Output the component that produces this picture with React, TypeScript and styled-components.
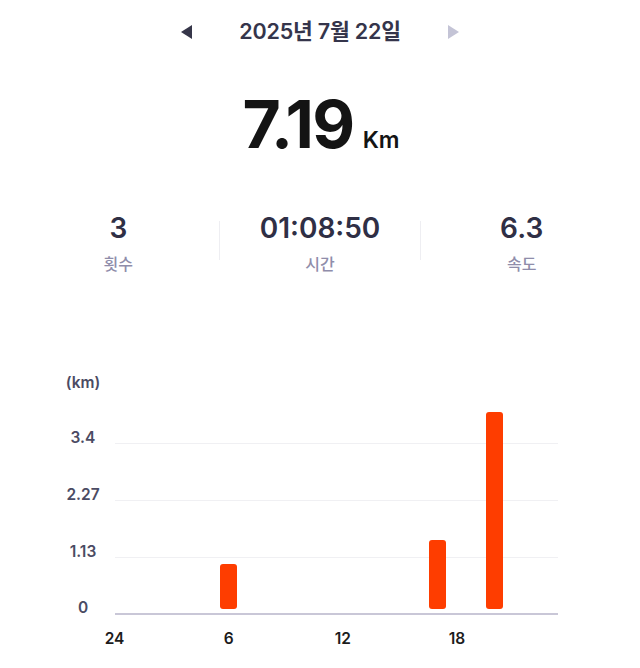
import React from 'react'
import styled, { createGlobalStyle } from 'styled-components'

const GlobalStyle = createGlobalStyle`
    body {
        margin: 0;
        background: #ffffff;
        font-family: Inter, 'Noto Sans CJK KR', sans-serif;
    }
`

const KM_PX = 50
const HOUR_PX = 19.03

const gridValues = [0, 1.13, 2.27, 3.4]
const hourTicks = [
    { hour: 0, label: '24' },
    { hour: 6, label: '6' },
    { hour: 12, label: '12' },
    { hour: 18, label: '18' },
]
const runs = [
    { hour: 6, km: 0.9 },
    { hour: 17, km: 1.38 },
    { hour: 20, km: 3.94 },
]

const Page = styled.div`
    width: 640px;
    height: 668px;
    overflow: hidden;
`

const DateBar = styled.div`
    height: 62px;
    display: flex;
    justify-content: center;
    align-items: center;
`

const DateNav = styled.div`
    width: 278px;
    display: flex;
    justify-content: space-between;
    align-items: center;
`

const Arrow = styled.span<{ $dir: 'left' | 'right'; $muted?: boolean }>`
    width: 0;
    height: 0;
    border-top: 7px solid transparent;
    border-bottom: 7px solid transparent;
    ${({ $dir, $muted }) =>
        $dir === 'left'
            ? `border-right: 11px solid ${$muted ? '#c4c4d6' : '#363649'};`
            : `border-left: 11px solid ${$muted ? '#c4c4d6' : '#363649'};`}
    margin-top: 1px;
`

const DateText = styled.h2`
    margin: 0;
    font-size: 21.5px;
    line-height: 24px;
    font-weight: 600;
    color: #35354b;
    letter-spacing: -0.2px;
`

const Total = styled.div`
    margin-top: 30px;
    display: flex;
    justify-content: center;
    align-items: baseline;
    gap: 9px;
    padding-left: 2px;
`

const TotalValue = styled.span`
    font-size: 66px;
    line-height: 64px;
    font-weight: 700;
    color: #141414;
    letter-spacing: -1.6px;
`

const TotalUnit = styled.span`
    font-size: 23px;
    font-weight: 600;
    color: #141414;
`

const StatsRow = styled.div`
    margin-top: 58px;
    padding: 0 18px;
    display: grid;
    grid-template-columns: 1fr 1px 1fr 1px 1fr;
`

const Stat = styled.div`
    display: flex;
    flex-direction: column;
    align-items: center;
    gap: 14px;
`

const StatValue = styled.span`
    font-size: 28px;
    line-height: 28px;
    font-weight: 600;
    color: #2f2f45;
`

const StatLabel = styled.span`
    font-size: 16px;
    line-height: 16px;
    font-weight: 500;
    color: #8f8daa;
`

const Divider = styled.div`
    width: 1px;
    height: 39px;
    margin-top: 7px;
    background: #eeeef2;
`

const Chart = styled.div`
    margin: 103px 0 0 51px;
    display: grid;
    grid-template-columns: 64px 443px;
    grid-template-rows: 15px 214px 15px;
    row-gap: 11px;
`

const AxisText = styled.span`
    font-size: 15.5px;
    line-height: 15px;
    font-weight: 600;
    color: #4b4b63;
`

const UnitLabel = styled(AxisText)`
    grid-column: 1;
    text-align: center;
`

const YAxis = styled.div`
    grid-column: 1;
    position: relative;
`

const YTick = styled(AxisText)`
    position: absolute;
    left: 0;
    right: 0;
    text-align: center;
`

const Plot = styled.div`
    grid-column: 2;
    position: relative;
    border-bottom: 2px solid #c9c7d7;
`

const GridLine = styled.div`
    position: absolute;
    left: 0;
    right: 0;
    height: 1px;
    background: #f0f0f3;
`

const Bar = styled.div`
    position: absolute;
    bottom: 4px;
    width: 17px;
    border-radius: 3px;
    background: #fe3d00;
`

const XAxis = styled.div`
    grid-column: 2;
    grid-row: 3;
    position: relative;
    margin-top: 5px;
`

const XTick = styled(AxisText)`
    position: absolute;
    top: 0;
    transform: translateX(-50%);
    color: #1c1c1c;
`

const App = () => (
    <Page>
        <GlobalStyle />
        <DateBar>
            <DateNav>
                <Arrow $dir='left' />
                <DateText>2025년 7월 22일</DateText>
                <Arrow $dir='right' $muted />
            </DateNav>
        </DateBar>

        <Total>
            <TotalValue>7.19</TotalValue>
            <TotalUnit>Km</TotalUnit>
        </Total>

        <StatsRow>
            <Stat>
                <StatValue>3</StatValue>
                <StatLabel>횟수</StatLabel>
            </Stat>
            <Divider />
            <Stat>
                <StatValue>01:08:50</StatValue>
                <StatLabel>시간</StatLabel>
            </Stat>
            <Divider />
            <Stat>
                <StatValue>6.3</StatValue>
                <StatLabel>속도</StatLabel>
            </Stat>
        </StatsRow>

        <Chart>
            <UnitLabel>(km)</UnitLabel>
            <YAxis>
                {gridValues.map((v) => (
                    <YTick key={v} style={{ top: 212 - v * KM_PX - 13 }}>{v}</YTick>
                ))}
            </YAxis>
            <Plot>
                {gridValues.filter((v) => v > 0).map((v) => (
                    <GridLine key={v} style={{ top: 212 - v * KM_PX }} />
                ))}
                {runs.map((r) => (
                    <Bar key={r.hour} style={{ left: r.hour * HOUR_PX - 9.5, height: r.km * KM_PX }} />
                ))}
            </Plot>
            <XAxis>
                {hourTicks.map((t) => (
                    <XTick key={t.label} style={{ left: t.hour * HOUR_PX - 0.5 }}>{t.label}</XTick>
                ))}
            </XAxis>
        </Chart>
    </Page>
)

export default App
